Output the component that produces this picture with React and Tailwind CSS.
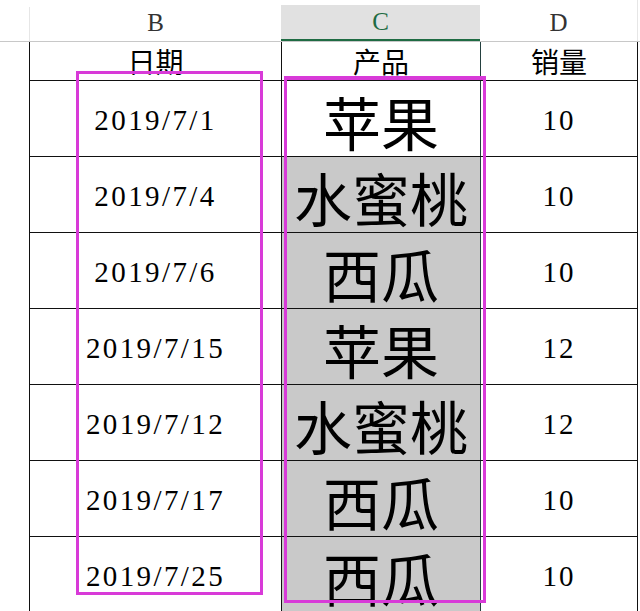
import React from 'react';

const rows = [
  { date: '2019/7/1', product: '苹果', qty: '10', shaded: false },
  { date: '2019/7/4', product: '水蜜桃', qty: '10', shaded: true },
  { date: '2019/7/6', product: '西瓜', qty: '10', shaded: true },
  { date: '2019/7/15', product: '苹果', qty: '12', shaded: true },
  { date: '2019/7/12', product: '水蜜桃', qty: '12', shaded: true },
  { date: '2019/7/17', product: '西瓜', qty: '10', shaded: true },
  { date: '2019/7/25', product: '西瓜', qty: '10', shaded: true },
];

const serif = "font-['Liberation_Serif','Noto_Sans_CJK_SC',serif]";
const cjk = "font-['Noto_Sans_CJK_SC',sans-serif]";

export default function App() {
  return (
    <div className="relative w-[640px] h-[611px] overflow-hidden bg-white text-black">
      {/* column letters strip */}
      <div className="flex h-[42px] border-b border-[#c8c8c8]">
        <div className="w-[30px] mt-[7px] border-r border-[#e6e6e6]" />
        <div className={`w-[251px] flex items-center justify-center pt-1 text-[25px] text-[#333] ${serif}`}>B</div>
        <div className={`w-[199px] mt-[5px] flex items-center justify-center bg-[#e1e1e1] border-b-2 border-[#1f6b43] text-[25px] text-[#1f6b43] ${serif}`}>C</div>
        <div className={`w-[157px] flex items-center justify-center pt-1 text-[25px] text-[#333] ${serif}`}>D</div>
        <div className="flex-1 border-l border-[#e6e6e6]" />
      </div>

      {/* sheet grid */}
      <div className="ml-[29px] w-[609px] border-l border-[#111]">
        <div className="flex h-[39px] border-b border-[#111]">
          <div className={`w-[252px] border-r border-[#111] flex items-center justify-center text-[28px] ${cjk}`}>日期</div>
          <div className={`w-[199px] border-r border-[#24403f] flex items-center justify-center text-[28px] ${cjk}`}>产品</div>
          <div className={`w-[157px] border-r border-[#111] flex items-center justify-center text-[28px] ${cjk}`}>销量</div>
        </div>
        {rows.map((r, i) => (
          <div key={i} className="flex h-[76px] border-b border-[#111]">
            <div className={`w-[252px] border-r border-[#111] flex items-center justify-center pt-[5px] text-[29px] tracking-[2.4px] ${serif}`}>
              {r.date}
            </div>
            <div
              className={`w-[199px] border-r border-[#24403f] flex items-center justify-center pt-[4px] text-[58px] leading-none ${cjk} ${
                r.shaded ? 'bg-[#c9c9c9]' : 'bg-white'
              }`}
            >
              {r.product}
            </div>
            <div className={`w-[157px] border-r border-[#111] flex items-center justify-center pt-[5px] text-[29px] tracking-[2px] ${serif}`}>
              {r.qty}
            </div>
          </div>
        ))}
      </div>

      {/* highlight boxes */}
      <div className="absolute left-[76px] top-[71px] w-[187px] h-[524px] border-[3px] border-[#d83ad8]" />
      <div className="absolute left-[284px] top-[76px] w-[202px] h-[527px] border-[3px] border-t-4 border-[#d83ad8]" />
    </div>
  );
}
